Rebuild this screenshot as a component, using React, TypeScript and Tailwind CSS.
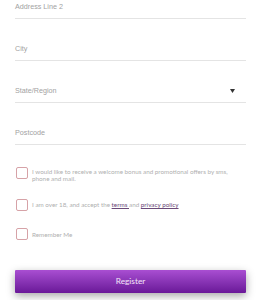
import React from "react";

function Field({ label, h, arrow }: { label: string; h: string; arrow?: boolean }) {
  return (
    <div className={`flex items-end justify-between border-b border-[#e4e4e4] pb-[7px] ${h}`}>
      <span className="text-[7.2px] leading-[9px] text-[#a2a2a2]" style={{ fontFamily: "'Liberation Sans', Arial, sans-serif" }}>
        {label}
      </span>
      {arrow && (
        <svg width="5" height="4" viewBox="0 0 5 4" className="mr-[11px] mb-[2px]">
          <polygon points="0,0 5,0 2.5,4" fill="#333" />
        </svg>
      )}
    </div>
  );
}

function Check({ children, className }: { children: React.ReactNode; className?: string }) {
  return (
    <div className={`flex items-start ${className ?? ""}`}>
      <div className="ml-[1px] w-[12px] h-[12px] shrink-0 rounded-[2px] border-[1.5px] border-[#d6a2a7]" />
      <div className="ml-[4px] mt-[0.5px] max-w-[212px] text-[6.3px] leading-[7.5px] text-[#b0b0b0]" style={{ fontFamily: "Lato, 'Open Sans', sans-serif" }}>
        {children}
      </div>
    </div>
  );
}

export default function App() {
  return (
    <div className="w-[262px] h-[300px] bg-white overflow-hidden">
      <div className="pl-[15px] pr-[16px]">
        <Field label="Address Line 2" h="h-[19px]" />
        <Field label="City" h="h-[42px]" />
        <Field label="State/Region" h="h-[42px]" arrow />
        <Field label="Postcode" h="h-[42px]" />
        <Check className="mt-[22px]">
          I would like to receive a welcome bonus and promotional offers by sms, phone and mail.
        </Check>
        <Check className="mt-[16px]">
          <span className="leading-[12px]">
            I am over 18, and accept the{" "}
            <span className="underline text-[#6b4a78]">terms </span> and{" "}
            <span className="underline text-[#6b4a78]">privacy policy</span>
          </span>
        </Check>
        <Check className="mt-[17px]">
          <span className="leading-[12px]">Remember Me</span>
        </Check>
        <button
          className="mt-[29px] w-full h-[23px] rounded-[1px] bg-gradient-to-b from-[#a94ed2] to-[#6a1798] shadow-[0_3px_8px_rgba(0,0,0,0.35)] text-[8.3px] text-[#f3e6f8] flex items-center justify-center"
          style={{ fontFamily: "Lato, 'Open Sans', sans-serif" }}
        >
          Register
        </button>
      </div>
    </div>
  );
}
